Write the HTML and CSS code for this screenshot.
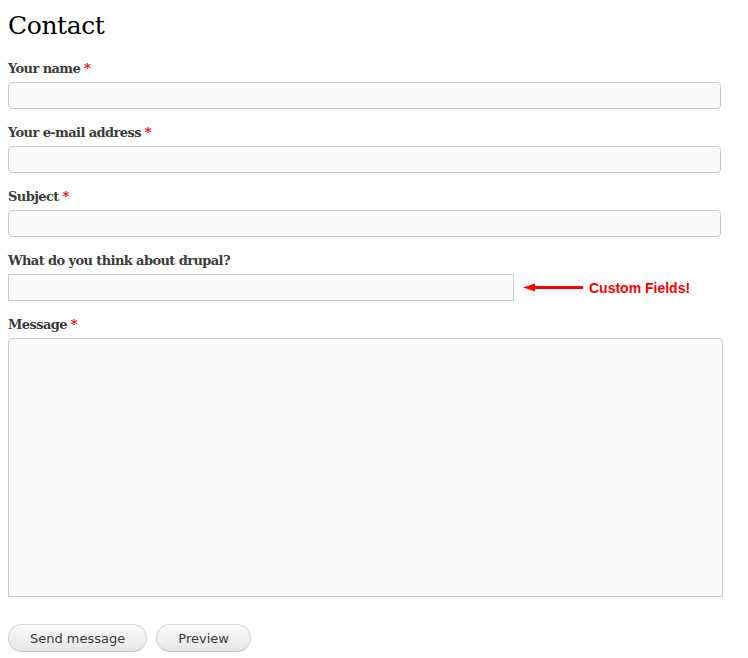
FILE: index.html
```html
<!DOCTYPE html>
<html lang="en">
<head>
<meta charset="utf-8">
<title>Contact</title>
<link rel="stylesheet" href="styles.css">
</head>
<body>
<main class="page">
  <h1 class="title">Contact</h1>
  <form class="contact-form">
    <div class="form-item">
      <label class="label" for="name">Your name <span class="req">*</span></label>
      <input class="text" id="name" type="text">
    </div>
    <div class="form-item">
      <label class="label" for="mail">Your e-mail address <span class="req">*</span></label>
      <input class="text" id="mail" type="text">
    </div>
    <div class="form-item">
      <label class="label" for="subject">Subject <span class="req">*</span></label>
      <input class="text" id="subject" type="text">
    </div>
    <div class="form-item">
      <label class="label" for="drupal">What do you think about drupal?</label>
      <div class="field-row">
        <input class="text short" id="drupal" type="text">
        <svg class="arrow" width="60" height="9" viewBox="0 0 60 9" aria-hidden="true">
          <polygon points="0,4.5 12,0.5 12,3 60,3 60,6 12,6 12,8.5" fill="#ff0000"/>
        </svg>
        <span class="note">Custom Fields!</span>
      </div>
    </div>
    <div class="form-item">
      <label class="label" for="message">Message <span class="req">*</span></label>
      <textarea class="textarea" id="message"></textarea>
    </div>
    <div class="actions">
      <button class="button" type="button">Send message</button>
      <button class="button" type="button">Preview</button>
    </div>
  </form>
</main>
</body>
</html>
```

FILE: styles.css
```css
html, body {
  margin: 0;
  padding: 0;
  background: #ffffff;
}

.page {
  padding: 0 8px;
}

.title {
  margin: 0;
  padding-top: 9px;
  height: 60px;
  box-sizing: border-box;
  font-family: "DejaVu Serif", Georgia, serif;
  font-weight: normal;
  font-size: 25px;
  line-height: 34px;
  letter-spacing: -0.4px;
  color: #000000;
}

.form-item {
  margin-bottom: 15px;
}

.label {
  display: block;
  font-family: "DejaVu Serif", Georgia, serif;
  font-weight: bold;
  font-size: 13px;
  line-height: 18px;
  color: #3b3b3b;
  margin-bottom: 4px;
  letter-spacing: -0.6px;
}

.req {
  color: #ff0000;
  font-weight: bold;
}

.text {
  display: block;
  box-sizing: border-box;
  width: 713px;
  height: 27px;
  margin: 0;
  padding: 2px 4px;
  border: 1px solid #cccccc;
  border-radius: 4px;
  background: #fafafa;
  font-family: "DejaVu Sans", sans-serif;
  font-size: 13px;
}

.text.short {
  width: 506px;
  border-radius: 0;
}

.field-row {
  display: flex;
  align-items: center;
}

.arrow {
  display: block;
  margin-left: 9px;
  flex: none;
}

.note {
  margin-left: 6px;
  font-family: "Liberation Sans", Arial, sans-serif;
  font-weight: bold;
  font-size: 14px;
  color: #ff0000;
}

.textarea {
  display: block;
  box-sizing: border-box;
  width: 715px;
  height: 259px;
  margin: 0;
  padding: 4px;
  border: 1px solid #cccccc;
  border-radius: 4px 4px 0 0;
  background: #fafafa;
  resize: none;
  font-family: "DejaVu Sans", sans-serif;
  font-size: 13px;
}

.actions {
  display: flex;
  gap: 9px;
  padding-top: 12px;
}

.button {
  box-sizing: border-box;
  height: 28px;
  padding: 0 21px;
  border: 1px solid #d4d4d4;
  border-bottom-color: #c4c4c4;
  border-radius: 14px;
  background: linear-gradient(#fbfbfb, #e6e6e6);
  font-family: "DejaVu Sans", Verdana, sans-serif;
  font-size: 13px;
  color: #3a3a3a;
  cursor: pointer;
}
```
